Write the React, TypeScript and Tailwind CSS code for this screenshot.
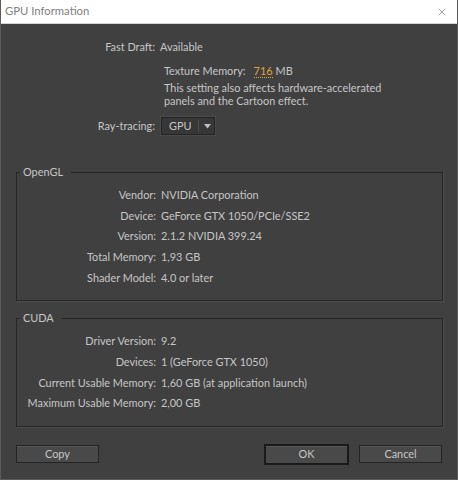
import { X } from "lucide-react"

const openGl: [string, string][] = [
  ["Vendor:", "NVIDIA Corporation"],
  ["Device:", "GeForce GTX 1050/PCIe/SSE2"],
  ["Version:", "2.1.2 NVIDIA 399.24"],
  ["Total Memory:", "1,93 GB"],
  ["Shader Model:", "4.0 or later"],
]

const cuda: [string, string][] = [
  ["Driver Version:", "9.2"],
  ["Devices:", "1 (GeForce GTX 1050)"],
  ["Current Usable Memory:", "1,60 GB (at application launch)"],
  ["Maximum Usable Memory:", "2,00 GB"],
]

function InfoRow({ label, value }: { label: string; value: string }) {
  return (
    <div className="flex items-center h-[20.65px]">
      <span className="w-[139px] text-right shrink-0">{label}</span>
      <span className="ml-[5px]">{value}</span>
    </div>
  )
}

function Group({ title, rows, pad }: { title: string; rows: [string, string][]; pad: string }) {
  return (
    <fieldset className={`ml-[15px] w-[427px] border border-[#262626] shadow-[1px_1px_0_#4d4d4d] ${pad}`}>
      <legend className="ml-[3px] pl-[3px] pr-[8px] leading-[16px]">{title}</legend>
      {rows.map(([l, v]) => (
        <InfoRow key={l} label={l} value={v} />
      ))}
    </fieldset>
  )
}

export default function App() {
  return (
    <div className="w-[458px] h-[480px] flex flex-col bg-[#404040] border border-[#5c5c5c] border-t-0 font-['Lato',sans-serif] text-[10.9px] text-[#c6c6c6]">
      {/* Title bar */}
      <div className="h-[24px] bg-white flex items-center justify-between pl-[4px] pr-[9px] border-b border-[#d4d4d4] shrink-0">
        <span className="text-[11.3px] text-[#808080]">GPU Information</span>
        <X className="w-[12px] h-[12px] text-[#5a5a5a]" strokeWidth={1.2} />
      </div>

      {/* Fast draft */}
      <div className="flex items-center h-[16px] mt-[15px]">
        <span className="w-[154px] text-right">Fast Draft:</span>
        <span className="ml-[5px]">Available</span>
      </div>

      <div className="ml-[163px] mt-[8px]">
        <div className="flex items-center h-[16px]">
          <span>Texture Memory:</span>
          <span className="ml-[8px] text-[#e0a43a] border-b border-dotted border-[#e0a43a] leading-[12px]">716</span>
          <span className="ml-[3px]">MB</span>
        </div>
        <p className="mt-[3px] leading-[12.5px]">
          This setting also affects hardware-accelerated
          <br />
          panels and the Cartoon effect.
        </p>
      </div>

      {/* Ray-tracing */}
      <div className="flex items-center h-[18px] mt-[10px]">
        <span className="w-[154px] text-right">Ray-tracing:</span>
        <div className="ml-[6px] w-[54px] h-[18px] flex items-center bg-[#373737] border border-[#242424] shadow-[0_0_0_1px_#4a4a4a]">
          <span className="pl-[7px] w-[36px]">GPU</span>
          <span className="w-px h-[12px] bg-[#4e4e4e]" />
          <svg className="ml-[5px] w-[7px] h-[5px]" viewBox="0 0 7 5">
            <path d="M0 0H7L3.5 4.5Z" fill="#bdbdbd" />
          </svg>
        </div>
      </div>

      <div className="mt-[29px]">
        <Group title="OpenGL" rows={openGl} pad="pt-[5px] pb-[12px]" />
      </div>
      <div className="mt-[9px]">
        <Group title="CUDA" rows={cuda} pad="pt-[5px] pb-[12px]" />
      </div>

      {/* Buttons */}
      <div className="flex items-center mt-[17px] h-[21px]">
        <button className="ml-[15px] w-[83px] h-[18px] bg-[#494949] border border-[#242424] shadow-[inset_0_1px_0_#575757] text-[#c6c6c6] leading-none">
          Copy
        </button>
        <button className="ml-[165px] w-[85px] h-[21px] bg-[#494949] border-2 border-[#1a1a1a] shadow-[inset_0_1px_0_#575757] text-[#c6c6c6] leading-none">
          OK
        </button>
        <button className="ml-[10px] w-[83px] h-[18px] bg-[#494949] border border-[#242424] shadow-[inset_0_1px_0_#575757] text-[#c6c6c6] leading-none">
          Cancel
        </button>
      </div>
    </div>
  )
}
